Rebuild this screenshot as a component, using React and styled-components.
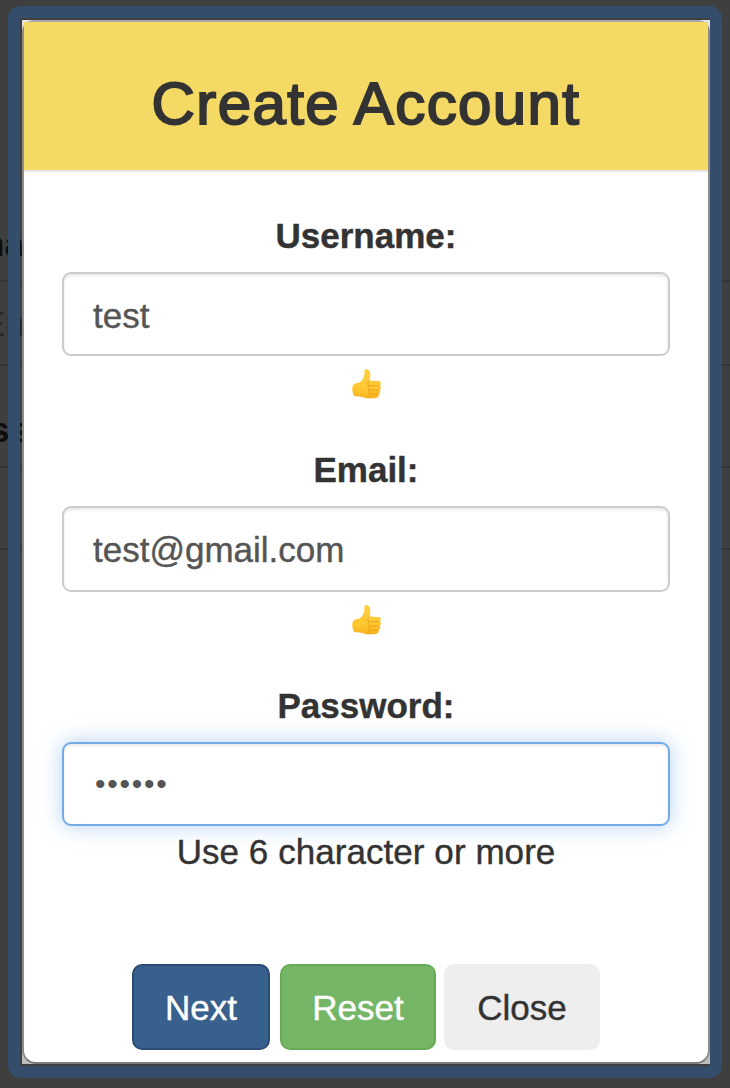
import React from "react";
import styled, { createGlobalStyle, css } from "styled-components";

const GlobalStyle = createGlobalStyle`
  * { box-sizing: border-box; }
  body {
    margin: 0;
    background: #3f3f3f;
    font-family: "Liberation Sans", Arial, sans-serif;
    color: #333;
    overflow: hidden;
  }
`;

const Page = styled.div`
  position: relative;
  width: 730px;
  height: 1088px;
  overflow: hidden;
  padding: 6px 8px 10px;
`;

const Backdrop = styled.div`
  position: absolute;
  inset: 0;
  padding-top: 224px;
  overflow: hidden;
`;

const DimLabel = styled.div`
  height: ${(p) => p.$height}px;
  margin-left: ${(p) => p.$shift || 0}px;
  padding-top: ${(p) => p.$top || 0}px;
  font-size: 35px;
  line-height: 40px;
  font-weight: 700;
  color: #0e0e0e;
  white-space: nowrap;
`;

const DimField = styled.div`
  height: ${(p) => p.$height}px;
  border: solid #353535;
  border-width: 2px 0;
  font-size: 35px;
  line-height: 83px;
  color: #272727;
  text-indent: -18px;
  white-space: nowrap;
`;

const Frame = styled.div`
  position: relative;
  width: 714px;
  height: 1072px;
  border: 12px solid #344d6b;
  border-radius: 13px;
`;

const Mat = styled.div`
  margin: 2px 0 2px 2px;
  width: 688px;
  height: 1044px;
  padding: 2px;
  background: linear-gradient(#e6e5ea, #bdbdbd);
`;

const Dialog = styled.form`
  display: flex;
  flex-direction: column;
  width: 684px;
  height: 1040px;
  background: #fff;
  border-radius: 0 0 12px 12px;
`;

const Edge = styled.div`
  width: 688px;
  height: 1044px;
  margin: -2px;
  border: 2px solid #8c8c8c;
  border-top-color: #a8a6a9;
  border-bottom-color: #7c7c7c;
  border-radius: 12px 12px 14px 14px;
`;

const Header = styled.header`
  flex: none;
  height: 150px;
  padding-top: 45px;
  border-bottom: 2px solid #e5e5e5;
  background: #f4d965;
  text-align: center;
`;

const Title = styled.h1`
  margin: 0;
  font-size: 60px;
  line-height: 73px;
  font-weight: 400;
  letter-spacing: 1.4px;
  word-spacing: -1px;
  -webkit-text-stroke: 2px #333;
`;

const Body = styled.div`
  flex: 1;
  padding: 44px 38px 0;
`;

const Field = styled.div`
  display: flex;
  flex-direction: column;
  align-items: center;
  height: ${(p) => p.$height}px;
`;

const Label = styled.label`
  height: 56px;
  font-size: 35px;
  line-height: 40px;
  font-weight: 700;
  -webkit-text-stroke: 0.4px #333;
`;

const Control = styled.div`
  flex: none;
  width: 608px;
  height: ${(p) => p.$height || 84}px;
  padding: 0 29px;
  border: 2px solid #ccc;
  border-radius: 9px;
  box-shadow: inset 0 2px 3px rgba(0, 0, 0, 0.09);
  color: #555;
  font-size: 35px;
  line-height: 83px;
  -webkit-text-stroke: 0.4px #555;
  ${(p) =>
    p.$focused &&
    css`
      padding-left: 31px;
      border-color: #73aae7;
      box-shadow: inset 0 2px 3px rgba(0, 0, 0, 0.09), 0 0 20px rgba(102, 170, 233, 0.5);
      font-size: 30px;
      line-height: 80px;
      letter-spacing: 1.75px;
      -webkit-text-stroke: 0;
    `}
`;

const Hint = styled.div`
  padding-top: 6px;
  font-size: 35px;
  line-height: 40px;
  letter-spacing: 0.06px;
  -webkit-text-stroke: 0.4px #333;
`;

const ThumbIcon = styled.svg`
  display: block;
  width: 30px;
  height: 32px;
  margin: 12px 0 0 1px;
`;

const Actions = styled.div`
  display: flex;
  flex: none;
  height: 98px;
  padding-left: 108px;
`;

const Button = styled.button`
  width: ${(p) => p.$width}px;
  height: 86px;
  margin: 0 ${(p) => p.$gap || 0}px 0 0;
  padding: 2px 0 0;
  border: 2px solid ${(p) => p.$edge};
  border-radius: 10px;
  background: ${(p) => p.$fill};
  color: ${(p) => p.$ink || "#fff"};
  font: 35px/40px "Liberation Sans", Arial, sans-serif;
  -webkit-text-stroke: 0.4px ${(p) => p.$ink || "#fff"};
`;

function ThumbsUp() {
  return (
    <ThumbIcon viewBox="0 0 30 32" aria-label="thumbs up">
      <defs>
        <linearGradient id="skin" x1="0" y1="0" x2="0" y2="1">
          <stop offset="0" stopColor="#ffd044" />
          <stop offset="0.7" stopColor="#ffc62f" />
          <stop offset="1" stopColor="#f8b41e" />
        </linearGradient>
      </defs>
      <path
        d="M1.5 16.5 Q4 14.5 7 14.8 C10.5 12.5 12.6 9.2 12.4 3.8 C12.3 1.2 14.2.5 16 1.4 C19 3 18.8 8 17.6 12.4 L26.3 12.9 C29.2 13.1 29.4 16.5 27.6 17.5 C29.6 18.5 29.4 21 27.4 22 C28.9 23 28.4 25.3 26.5 26 C27.4 27.6 26.6 29.4 24.1 29.8 L16.5 30 C12.8 30 10.5 28.3 7.4 28.1 Q4 28.2 1.8 27.2 C-.2 24 -.2 19 1.5 16.5Z"
        fill="url(#skin)"
      />
      <path
        d="M17.1 13.3 C15.1 14.8 15.3 17 17 17.8 C15.6 19 16 21.4 17.3 22 C16.1 23.4 16.6 25.3 18 26 C17.1 27.5 17.3 29 18.4 29.8 M17.3 17.7 L27.2 17.6 M17.6 22 L27 22 M18.2 26 L26.2 26"
        fill="none"
        stroke="#e59a18"
        strokeWidth="0.8"
        strokeLinecap="round"
      />
      <path d="M1.8 27.2 Q4 28.2 7.4 28.1 C10.5 28.3 12.8 30 16.5 30 L24.1 29.8" fill="none" stroke="#eda620" strokeWidth="0.7" />
    </ThumbIcon>
  );
}

const DialogShell = styled.div`
  display: grid;
  > * { grid-area: 1 / 1; }
`;

export default function App() {
  return (
    <>
      <GlobalStyle />
      <Page>
        <Backdrop aria-hidden="true">
          <DimLabel $height={56} $shift={-17}>na</DimLabel>
          <DimField $height={86}>En</DimField>
          <DimLabel $height={100} $shift={-10} $top={44}>ss</DimLabel>
          <DimField $height={84} />
        </Backdrop>
        <Frame>
          <Mat>
            <DialogShell>
              <Edge />
              <Dialog>
                <Header>
                  <Title>Create Account</Title>
                </Header>
                <Body>
                  <Field $height={234}>
                    <Label>Username:</Label>
                    <Control>test</Control>
                    <ThumbsUp />
                  </Field>
                  <Field $height={236}>
                    <Label>Email:</Label>
                    <Control $height={86}>test@gmail.com</Control>
                    <ThumbsUp />
                  </Field>
                  <Field $height={200}>
                    <Label>Password:</Label>
                    <Control $focused>••••••</Control>
                    <Hint>Use 6 character or more</Hint>
                  </Field>
                </Body>
                <Actions>
                  <Button type="button" $width={138} $gap={10} $fill="#37608d" $edge="#2c4c75">Next</Button>
                  <Button type="button" $width={156} $gap={8} $fill="#75b666" $edge="#67ab57">Reset</Button>
                  <Button type="button" $width={156} $fill="#eee" $edge="#eee" $ink="#333">Close</Button>
                </Actions>
              </Dialog>
            </DialogShell>
          </Mat>
        </Frame>
      </Page>
    </>
  );
}
